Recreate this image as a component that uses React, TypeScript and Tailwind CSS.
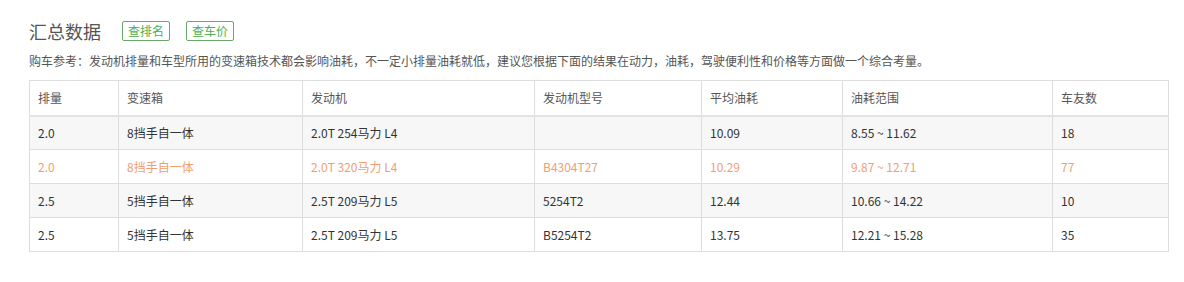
const rows = [
    { pl: "2.0", gb: "8挡手自一体", eng: "2.0T 254马力 L4", code: "", avg: "10.09", range: "8.55 ~ 11.62", n: "18" },
    { pl: "2.0", gb: "8挡手自一体", eng: "2.0T 320马力 L4", code: "B4304T27", avg: "10.29", range: "9.87 ~ 12.71", n: "77", hot: true },
    { pl: "2.5", gb: "5挡手自一体", eng: "2.5T 209马力 L5", code: "5254T2", avg: "12.44", range: "10.66 ~ 14.22", n: "10" },
    { pl: "2.5", gb: "5挡手自一体", eng: "2.5T 209马力 L5", code: "B5254T2", avg: "13.75", range: "12.21 ~ 15.28", n: "35" },
];

const heads = ["排量", "变速箱", "发动机", "发动机型号", "平均油耗", "油耗范围", "车友数"];
const widths = ["w-[89px]", "w-[184px]", "w-[232px]", "w-[167px]", "w-[141px]", "w-[210px]", "w-[116px]"];

export default function App() {
    return (
        <div className="min-h-[282px] w-[1184px] bg-white pl-[29px] pt-[20px] font-['Noto_Sans_CJK_SC','Noto_Sans',sans-serif] text-[12px] text-[#333]">
            {/* ** Title ** */}
            <div className="flex h-[22px] items-center">
                <h2 className="text-[18px] leading-[22px] font-normal text-[#555]">汇总数据</h2>
                <a className="ml-[21px] flex h-[20px] w-[48px] items-center justify-center rounded-[2px] border border-[#6aa86a] text-[12px] text-[#4caf50]">查排名</a>
                <a className="ml-[16px] flex h-[20px] w-[48px] items-center justify-center rounded-[2px] border border-[#6aa86a] text-[12px] text-[#4caf50]">查车价</a>
            </div>
            {/* ** Note ** */}
            <p className="mt-[10px] leading-[18px] text-[#555]">
                购车参考：发动机排量和车型所用的变速箱技术都会影响油耗，不一定小排量油耗就低，建议您根据下面的结果在动力，油耗，驾驶便利性和价格等方面做一个综合考量。
            </p>
            {/* ** Table ** */}
            <table className="mt-[10px] w-[1139px] table-fixed border-collapse text-[12px]">
                <thead>
                    <tr className="h-[35px] border-b-[2px] border-[#e3e3e3] bg-white">
                        {heads.map((h, i) => (
                            <th key={h} className={`${widths[i]} border border-[#ddd] px-[8px] text-left font-normal text-[#555]`}>
                                {h}
                            </th>
                        ))}
                    </tr>
                </thead>
                <tbody>
                    {rows.map((r, idx) => {
                        const cells = [r.pl, r.gb, r.eng, r.code, r.avg, r.range, r.n];
                        return (
                            <tr key={idx} className={`h-[34px] ${idx % 2 === 0 ? "bg-[#f7f7f7]" : "bg-white"} ${r.hot ? "text-[#f0a070]" : "text-[#333]"}`}>
                                {cells.map((c, i) => (
                                    <td key={i} className="border border-[#ddd] px-[8px] text-left">
                                        {c}
                                    </td>
                                ))}
                            </tr>
                        );
                    })}
                </tbody>
            </table>
        </div>
    );
}
